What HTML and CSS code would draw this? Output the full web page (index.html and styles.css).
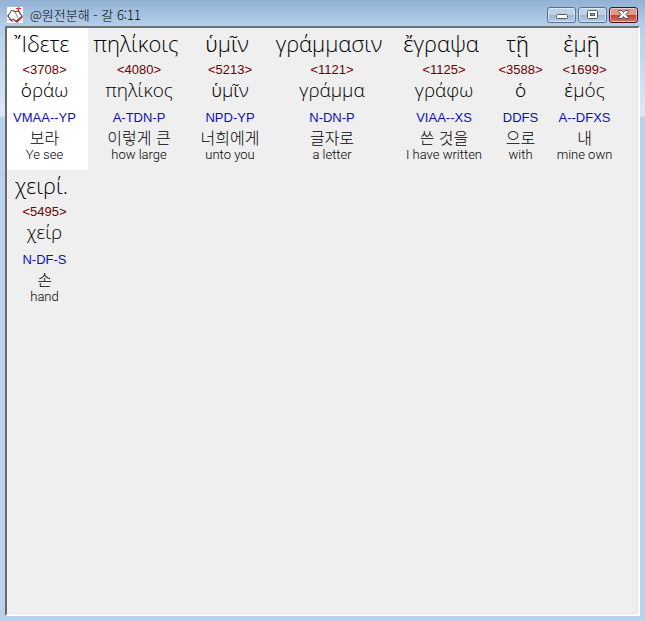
FILE: index.html
```html
<!DOCTYPE html>
<html lang="ko">
<head>
    <meta charset="UTF-8">
    <meta name="viewport" content="width=device-width, initial-scale=1.0">
    <title>@원전분해 - 갈 6:11</title>
    <link rel="stylesheet" href="styles.css">
</head>
<body>
    <div class="window">
        <header class="titlebar">
            <svg class="app-icon" viewBox="0 0 16 16" aria-hidden="true">
                <rect width="16" height="16" fill="#fff"/>
                <path d="M0 9 5 3l4 1 3-1 4 7-6 6-4-3-2 1z" fill="#b5383b"/>
                <path d="M1 9 5 3l3 2 3-1 4 5-6 5-3-2-2 1z" fill="#fff" stroke="#57504f"/>
                <path d="M8 5l3 6" stroke="#888" fill="none"/>
                <path d="M11.500 0v4M9 1.500h5M2 12l4 3" stroke="#e32932" fill="none"/>
            </svg>
            <h1>@원전분해 - 갈 6:11</h1>
            <div class="controls">
                <button type="button" aria-label="Minimize">
                    <svg viewBox="0 0 28 14"><rect x="8.500" y="6.500" width="11" height="4" rx="1" fill="#fff" stroke="#555b66"/></svg>
                </button>
                <button type="button" aria-label="Maximize">
                    <svg viewBox="0 0 28 14"><rect x="8.500" y="2.500" width="10" height="8" rx="1" fill="#fff" stroke="#555b66"/><rect x="11.500" y="5.500" width="4" height="2" fill="#8fb0d2" stroke="#555b66"/></svg>
                </button>
                <button type="button" class="close" aria-label="Close">
                    <svg viewBox="0 0 28 14"><path d="M8.500 2.500h3.500l1.500 2 1.500-2h3.500v1L16 6.500l2.500 3v1h-3.500l-1.500-2-1.500 2H8.500v-1l2.500-3-2.500-3z" fill="#fff" stroke="#5b4a55"/></svg>
                </button>
            </div>
        </header>

        <main class="verse">
            <section class="word selected">
                <p class="greek" lang="grc">῎Ιδετε</p>
                <p class="strong">&lt;3708&gt;</p>
                <p class="lemma" lang="grc">ὁράω</p>
                <p class="parse">VMAA--YP</p>
                <p class="korean">보라</p>
                <p class="english" lang="en">Ye see</p>
            </section>
            <section class="word">
                <p class="greek" lang="grc">πηλίκοις</p>
                <p class="strong">&lt;4080&gt;</p>
                <p class="lemma" lang="grc">πηλίκος</p>
                <p class="parse">A-TDN-P</p>
                <p class="korean">이렇게 큰</p>
                <p class="english" lang="en">how large</p>
            </section>
            <section class="word">
                <p class="greek" lang="grc">ὑμῖν</p>
                <p class="strong">&lt;5213&gt;</p>
                <p class="lemma" lang="grc">ὑμῖν</p>
                <p class="parse">NPD-YP</p>
                <p class="korean">너희에게</p>
                <p class="english" lang="en">unto you</p>
            </section>
            <section class="word">
                <p class="greek" lang="grc">γράμμασιν</p>
                <p class="strong">&lt;1121&gt;</p>
                <p class="lemma" lang="grc">γράμμα</p>
                <p class="parse">N-DN-P</p>
                <p class="korean">글자로</p>
                <p class="english" lang="en">a letter</p>
            </section>
            <section class="word">
                <p class="greek" lang="grc">ἔγραψα</p>
                <p class="strong">&lt;1125&gt;</p>
                <p class="lemma" lang="grc">γράφω</p>
                <p class="parse">VIAA--XS</p>
                <p class="korean">쓴 것을</p>
                <p class="english" lang="en">I have written</p>
            </section>
            <section class="word">
                <p class="greek" lang="grc">τῇ</p>
                <p class="strong">&lt;3588&gt;</p>
                <p class="lemma" lang="grc">ὁ</p>
                <p class="parse">DDFS</p>
                <p class="korean">으로</p>
                <p class="english" lang="en">with</p>
            </section>
            <section class="word">
                <p class="greek" lang="grc">ἐμῇ</p>
                <p class="strong">&lt;1699&gt;</p>
                <p class="lemma" lang="grc">ἐμός</p>
                <p class="parse">A--DFXS</p>
                <p class="korean">내</p>
                <p class="english" lang="en">mine own</p>
            </section>
            <section class="word">
                <p class="greek" lang="grc">χειρί.</p>
                <p class="strong">&lt;5495&gt;</p>
                <p class="lemma" lang="grc">χείρ</p>
                <p class="parse">N-DF-S</p>
                <p class="korean">손</p>
                <p class="english" lang="en">hand</p>
            </section>
        </main>
    </div>
</body>
</html>
```
FILE: styles.css
```css
* {
    box-sizing: border-box;
}
body {
    margin: 0;
    font-family: "Liberation Sans", "Noto Sans CJK KR", sans-serif;
    font-size: 13px;
    color: #000;
}
h1,
p {
    margin: 0;
}
.window {
    display: flex;
    flex-direction: column;
    min-height: 100vh;
    padding: 0 5px 5px;
    background: linear-gradient(#92b2d4 0, #b5cfea 26px, #dce9f7 115px, #b9d1ea 118px);
}
.titlebar {
    display: flex;
    align-items: center;
    height: 26px;
    padding: 4px 2px 0;
}
.app-icon {
    width: 16px;
    height: 16px;
}
.titlebar h1 {
    flex: 1;
    margin-left: 7px;
    font-family: "Noto Sans CJK KR", sans-serif;
    font-size: 13px;
    font-weight: 300;
    line-height: 16px;
}
.controls {
    display: flex;
    align-self: flex-start;
    gap: 2px;
    margin-top: 3px;
}
.controls button {
    width: 29px;
    height: 16px;
    padding: 0;
    border: 1px solid #54718f;
    border-radius: 3px;
    background: linear-gradient(#bdd2e8 50%, #98b6d5 50%, #b4cde6);
    box-shadow: inset 0 0 0 1px rgba(255, 255, 255, 0.5);
}
.controls .close {
    border-color: #46161d;
    background: linear-gradient(#dd9a8c 50%, #bd4230 50%, #cf7763);
}
.controls svg {
    display: block;
    width: 28px;
    height: 14px;
}
.verse {
    flex: 1;
    display: grid;
    grid-template-columns: 81px 102px 80px 124px 100px 53px 75px;
    align-content: start;
    border: 2px solid;
    border-color: #707070 #fff #fff #696969;
    background: #efefef;
    box-shadow: inset -1px -1px #e3e3e3;
}
.word {
    height: 142px;
    text-align: center;
    white-space: nowrap;
}
/* first word of each line sits closer to the left edge */
.word:nth-child(7n + 1) {
    padding-right: 6px;
}
.selected {
    background: #fff;
}
.greek,
.lemma {
    font-family: "Open Sans", "Noto Sans", sans-serif;
    font-weight: 300;
}
.greek {
    padding-right: 6px;
    font-size: 22px;
    line-height: 30px;
}
.strong {
    padding-top: 4px;
    color: #700000;
    line-height: 16px;
}
.lemma {
    font-size: 19px;
    line-height: 24px;
}
.parse {
    padding-top: 8px;
    color: #1010b4;
    line-height: 16px;
}
.korean {
    font-family: "Noto Sans CJK KR", sans-serif;
    font-size: 16px;
    font-weight: 300;
    line-height: 22px;
}
.english {
    font-family: Roboto, sans-serif;
    font-size: 13px;
    font-weight: 300;
    line-height: 14px;
}
```
